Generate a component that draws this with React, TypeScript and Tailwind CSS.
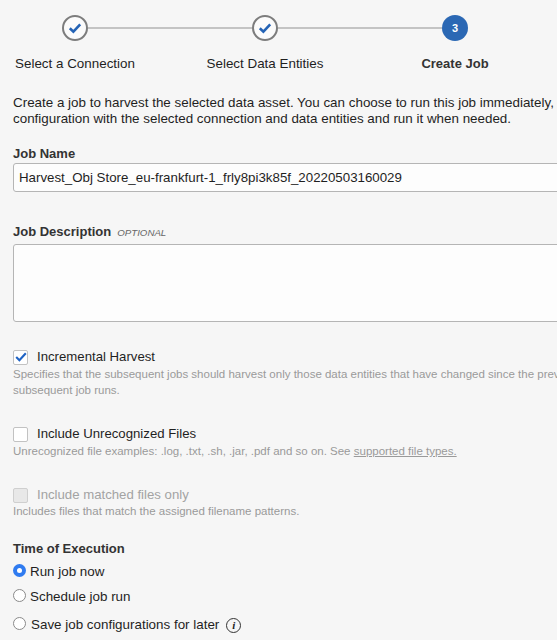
import React from 'react';

const Done = () => (
  <div className="flex h-[26px] w-[26px] shrink-0 items-center justify-center rounded-full border-2 border-[#7d7d7d] bg-[#fbfbfb]">
    <svg width="14" height="12" viewBox="0 0 14 12" fill="none">
      <path d="M1.8 6.2 L5.4 9.6 L12.2 2.4" stroke="#2463b5" strokeWidth="2.6" />
    </svg>
  </div>
);

const Line = () => <div className="h-[2px] w-[164px] shrink-0 bg-[#c4c4c4]" />;

const Radio = ({ checked }: { checked?: boolean }) =>
  checked ? (
    <span className="mb-[3px] flex h-[13px] w-[13px] shrink-0 items-center justify-center rounded-full bg-[#2f7bf0]">
      <span className="h-[5px] w-[5px] rounded-full bg-white" />
    </span>
  ) : (
    <span className="mb-[3px] h-[13px] w-[13px] shrink-0 rounded-full border border-[#8a8a8a] bg-white" />
  );

export default function App() {
  return (
    <div className="h-[640px] w-[557px] overflow-hidden bg-[#f6f6f6] font-['Liberation_Sans',Arial,sans-serif] text-[13.4px] text-[#1f1f1f]">
      <div className="flex items-center pl-[62px] pt-[15px]">
        <Done />
        <Line />
        <Done />
        <Line />
        <div className="flex h-[26px] w-[26px] shrink-0 items-center justify-center rounded-full bg-[#2b68b4] text-[11px] font-bold text-white">
          3
        </div>
      </div>

      <div className="mt-[15px] flex gap-[40px] leading-[16px]">
        <div className="w-[150px] text-center">Select a Connection</div>
        <div className="w-[150px] text-center">Select Data Entities</div>
        <div className="w-[150px] text-center text-[13px] font-bold text-[#333]">Create Job</div>
      </div>

      <div className="px-[13px]">
        <p className="mt-[23px] whitespace-nowrap leading-[16px]">
          Create a job to harvest the selected data asset. You can choose to run this job immediately,
          <br />
          configuration with the selected connection and data entities and run it when needed.
        </p>

        <div className="mt-[19px] text-[13px] font-bold leading-[16px] text-[#333]">Job Name</div>
        <div className="mt-[1px] flex h-[29px] w-[600px] items-center rounded-[3px] border border-[#b5b5b5] bg-[#fdfdfd] pl-[5px] text-[13.3px] whitespace-nowrap">
          Harvest_Obj Store_eu-frankfurt-1_frly8pi3k85f_20220503160029
        </div>

        <div className="mt-[32px] flex items-baseline gap-[6px] leading-[16px]">
          <span className="text-[13px] font-bold text-[#333]">Job Description</span>
          <span className="text-[9.7px] italic text-[#666]">OPTIONAL</span>
        </div>
        <div className="mt-[3px] h-[78px] w-[600px] rounded-[3px] border border-[#b5b5b5] bg-[#fdfdfd]" />

        <div className="mt-[27px] flex items-center gap-[9px] leading-[16px]">
          <div className="flex h-[15px] w-[15px] shrink-0 items-center justify-center rounded-[2px] border border-[#c2c2c2] bg-white">
            <svg width="12" height="10" viewBox="0 0 12 10" fill="none">
              <path d="M1.2 5 L4.4 8.2 L10.8 1.2" stroke="#1f63c4" strokeWidth="2.1" />
            </svg>
          </div>
          <span className="text-[13.2px]">Incremental Harvest</span>
        </div>
        <p className="mt-[1px] whitespace-nowrap text-[11.5px] leading-[16px] text-[#9a9a9a]">
          Specifies that the subsequent jobs should harvest only those data entities that have changed since the previous
          <br />
          subsequent job runs.
        </p>

        <div className="mt-[28px] flex items-center gap-[9px] leading-[16px]">
          <div className="h-[15px] w-[15px] shrink-0 rounded-[2px] border border-[#c2c2c2] bg-white" />
          <span className="text-[13.2px]">Include Unrecognized Files</span>
        </div>
        <p className="mt-[1px] whitespace-nowrap text-[11.5px] leading-[16px] text-[#9a9a9a]">
          Unrecognized file examples: .log, .txt, .sh, .jar, .pdf and so on. See{' '}
          <span className="underline">supported file types.</span>
        </p>

        <div className="mt-[28px] flex items-center gap-[9px] leading-[16px] text-[#a3a3a3]">
          <div className="h-[15px] w-[15px] shrink-0 rounded-[2px] border border-[#cfcfcf] bg-[#e8e8e8]" />
          <span className="text-[13.2px]">Include matched files only</span>
        </div>
        <p className="whitespace-nowrap text-[11.5px] leading-[16px] text-[#9a9a9a]">
          Includes files that match the assigned filename patterns.
        </p>

        <div className="mt-[22px] text-[13px] font-bold leading-[16px] text-[#333]">Time of Execution</div>
        <div className="mt-[7px] flex items-center gap-[4px] leading-[16px]">
          <Radio checked />
          <span>Run job now</span>
        </div>
        <div className="mt-[9px] flex items-center gap-[4px] leading-[16px]">
          <Radio />
          <span>Schedule job run</span>
        </div>
        <div className="mt-[12px] flex items-center gap-[5px] leading-[16px]">
          <Radio />
          <span>Save job configurations for later</span>
          <span className="ml-[2px] flex h-[15px] w-[15px] items-center justify-center rounded-full border border-[#333] font-['Liberation_Serif',serif] text-[11px] font-bold italic">
            i
          </span>
        </div>
      </div>
    </div>
  );
}
